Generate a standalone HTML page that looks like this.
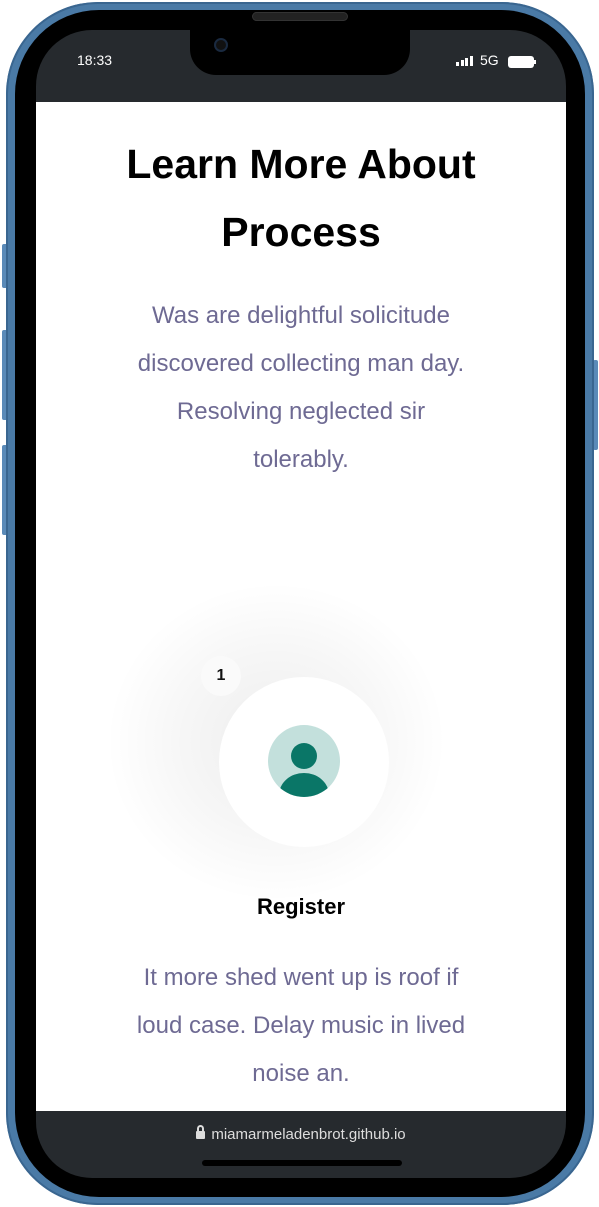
<!DOCTYPE html>
<html><head><meta charset="utf-8"><style>
*{margin:0;padding:0;box-sizing:border-box}
body{width:599px;height:1207px;background:#fff;position:relative;overflow:hidden;font-family:"Liberation Sans",sans-serif}
.btn{position:absolute;background:#5a8ab8;border-radius:2px;width:6px}
.frame{position:absolute;left:6px;top:2px;width:588px;height:1203px;border-radius:92px;background:#4a7aa6;box-shadow:inset 0 0 0 2px #3a6690}
.black{position:absolute;left:15px;top:10px;width:570px;height:1187px;border-radius:84px;background:#000}
.screen{position:absolute;left:36px;top:30px;width:530px;height:1148px;border-radius:56px;background:#262a2e;overflow:hidden}
.white{position:absolute;left:0;top:72px;width:530px;height:1009px;background:#fff;overflow:hidden}
.notch{position:absolute;left:190px;top:28px;width:220px;height:47px;background:#000;border-radius:0 0 26px 26px}
.spk{position:absolute;left:252px;top:12px;width:96px;height:9px;border-radius:5px;background:#222;border:1px solid #333}
.st{position:absolute;color:#fff;font-size:14px;font-weight:bold}
h1{position:absolute;left:0;width:530px;top:28px;text-align:center;font-size:41px;line-height:68px;color:#000;font-weight:bold}
.p{position:absolute;left:0;width:530px;text-align:center;color:#6e6a93;font-size:24px;line-height:48px;white-space:nowrap}
</style></head><body>
<div class="btn" style="left:2px;top:244px;height:44px"></div>
<div class="btn" style="left:2px;top:330px;height:90px"></div>
<div class="btn" style="left:2px;top:445px;height:90px"></div>
<div class="btn" style="left:593px;top:360px;height:90px;width:5px"></div>
<div class="frame"></div>
<div class="black"></div>
<div class="screen">
 <div class="white">
  <h1>Learn More About<br>Process</h1>
  <div class="p" style="top:190px">Was are delightful solicitude<br>discovered collecting man day.<br>Resolving neglected sir<br>tolerably.</div>
  <div style="position:absolute;left:70px;top:480px;width:340px;height:320px;border-radius:50%;background:radial-gradient(closest-side,rgba(0,0,0,0.07),rgba(0,0,0,0.03) 60%,rgba(0,0,0,0))"></div>
  <div style="position:absolute;left:165px;top:554px;width:40px;height:40px;border-radius:50%;background:#fafafa;text-align:center;line-height:40px;font-weight:bold;font-size:16px;color:#111">1</div>
  <div style="position:absolute;left:183px;top:575px;width:170px;height:170px;border-radius:50%;background:#fff"></div>
  <svg style="position:absolute;left:232px;top:623px" width="72" height="72" viewBox="0 0 72 72"><circle cx="36" cy="36" r="36" fill="#c3e0dc"/><clipPath id="c"><circle cx="36" cy="36" r="36"/></clipPath><circle cx="36" cy="31" r="13" fill="#0a7667"/><ellipse cx="36" cy="70" rx="25" ry="22" fill="#0a7667" clip-path="url(#c)"/></svg>
  <div style="position:absolute;left:0;width:530px;top:792px;text-align:center;font-size:22px;font-weight:bold;color:#000">Register</div>
  <div class="p" style="top:852px">It more shed went up is roof if<br>loud case. Delay music in lived<br>noise an.</div>
 </div>
 <div class="st" style="left:41px;top:22px;font-weight:normal;font-size:14px">18:33</div>
 <div style="position:absolute;left:420px;top:26px;display:flex;align-items:flex-end;gap:1.5px">
  <div style="width:3px;height:4px;background:#fff"></div><div style="width:3px;height:6px;background:#fff"></div><div style="width:3px;height:8px;background:#fff"></div><div style="width:3px;height:10px;background:#fff"></div></div>
 <div class="st" style="left:444px;top:22px;font-weight:normal">5G</div>
 <div style="position:absolute;left:472px;top:26px;width:26px;height:12px;border-radius:3px;background:#fff"></div>
 <div style="position:absolute;left:498px;top:30px;width:2px;height:4px;background:#fff"></div>
 <div style="position:absolute;left:0;width:530px;top:1096px;text-align:center;color:#ddd;font-size:15px"><span style="display:inline-block;width:9px;height:8px;background:#ddd;border-radius:1px;margin-right:6px;position:relative"><span style="position:absolute;left:1px;top:-6px;width:7px;height:8px;border:2px solid #ddd;border-bottom:none;border-radius:4px 4px 0 0"></span></span>miamarmeladenbrot.github.io</div>
 <div style="position:absolute;left:166px;top:1130px;width:200px;height:6px;border-radius:3px;background:#000"></div>
</div>
<div class="notch"></div>
<div class="spk"></div>
<div style="position:absolute;left:214px;top:38px;width:14px;height:14px;border-radius:50%;background:#111;border:2px solid #1a2a40"></div>
</body></html>
